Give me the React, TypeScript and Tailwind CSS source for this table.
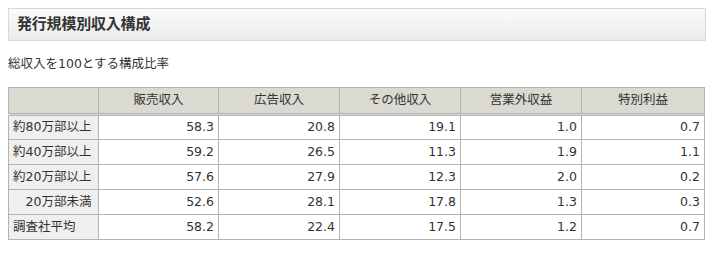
import React from 'react';

const headers = ['販売収入', '広告収入', 'その他収入', '営業外収益', '特別利益'];

const rows: { label: string; values: string[] }[] = [
    { label: '約80万部以上', values: ['58.3', '20.8', '19.1', '1.0', '0.7'] },
    { label: '約40万部以上', values: ['59.2', '26.5', '11.3', '1.9', '1.1'] },
    { label: '約20万部以上', values: ['57.6', '27.9', '12.3', '2.0', '0.2'] },
    { label: '\u300020万部未満', values: ['52.6', '28.1', '17.8', '1.3', '0.3'] },
    { label: '調査社平均', values: ['58.2', '22.4', '17.5', '1.2', '0.7'] },
];

const font = { fontFamily: '"DejaVu Sans", "Noto Sans CJK JP", sans-serif' };

const App: React.FC = () => {
    return (
        <div className="w-[718px] h-[263px] bg-white text-[#333] px-2 pt-2" style={font}>
            <div className="h-[33px] w-[698px] border border-[#d9d9d0] bg-gradient-to-b from-[#fbfbfb] to-[#ecebeb] flex items-center pl-[8px]">
                <h2 className="text-[15px] font-bold tracking-[-0.2px] text-[#333]">発行規模別収入構成</h2>
            </div>

            <p className="mt-[13px] h-[20px] leading-[20px] text-[12.5px]">総収入を100とする構成比率</p>

            <table className="mt-[13px] border-collapse text-[12.5px] table-fixed w-[696px]">
                <colgroup>
                    <col className="w-[90px]" />
                    <col className="w-[120px]" />
                    <col className="w-[121px]" />
                    <col className="w-[121px]" />
                    <col className="w-[121px]" />
                    <col className="w-[123px]" />
                </colgroup>
                <thead>
                    <tr className="h-[27px] bg-[#dadad2]">
                        <th className="border border-[#b3b3b3] border-b-[3px] border-b-[#b3b3b3] [border-bottom-style:double]"></th>
                        {headers.map((h) => (
                            <th
                                key={h}
                                className="border border-[#b3b3b3] border-b-[3px] [border-bottom-style:double] font-normal text-center pb-[1px]"
                            >
                                {h}
                            </th>
                        ))}
                    </tr>
                </thead>
                <tbody>
                    {rows.map((r) => (
                        <tr key={r.label} className="h-[25px]">
                            <td className="border border-[#b3b3b3] bg-[#efefef] pl-[4px] whitespace-pre">{r.label}</td>
                            {r.values.map((v, i) => (
                                <td key={i} className="border border-[#b3b3b3] text-right pr-[4px]">
                                    {v}
                                </td>
                            ))}
                        </tr>
                    ))}
                </tbody>
            </table>
        </div>
    );
};

export default App;
